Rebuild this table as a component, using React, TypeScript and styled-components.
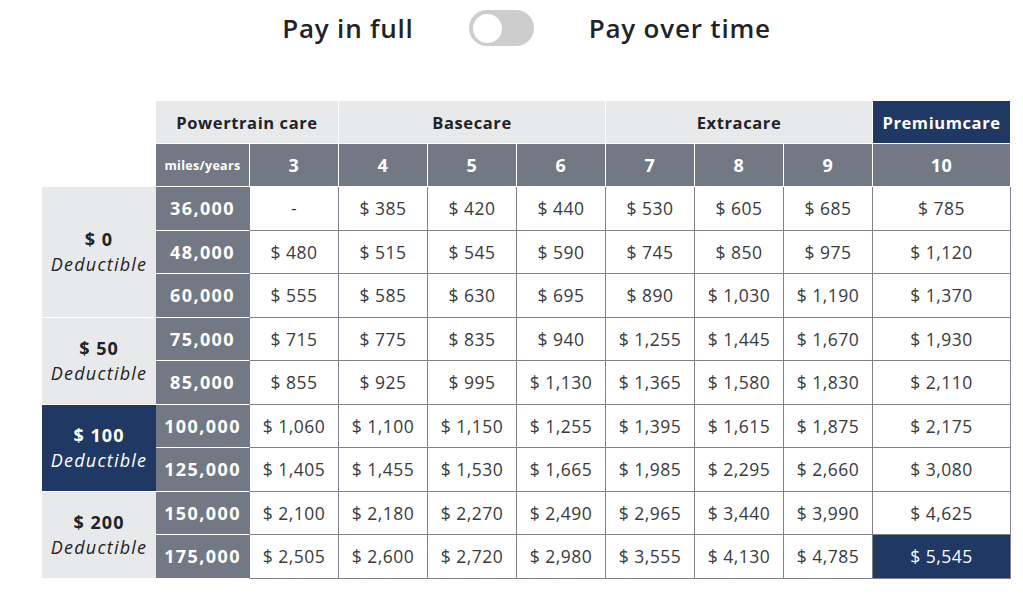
import React from "react";
import styled, { createGlobalStyle, css } from "styled-components";

const GlobalStyle = createGlobalStyle`
  html, body { margin: 0; padding: 0; background: #ffffff; }
  body { font-family: "Open Sans", "Liberation Sans", sans-serif; }
`;

const NAVY = "#1f3864";
const SLATE = "#737984";
const LIGHT = "#e8e9eb";
const LINE = "#7d828c";

const Page = styled.div`
  padding-left: 42px;
  width: 969px;
`;

const ToggleRow = styled.div`
  display: flex;
  align-items: center;
  justify-content: center;
  gap: 55px;
  padding-top: 10px;
  height: 36px;
  margin-bottom: 55px;
`;

const ToggleLabel = styled.span`
  font-size: 26px;
  font-weight: 600;
  color: #222326;
  letter-spacing: 0.8px;
`;

const Track = styled.div`
  width: 65px;
  height: 36px;
  border-radius: 18px;
  background: #cdcdcd;
  display: flex;
  align-items: center;
  padding: 0 4px;
  box-sizing: border-box;
`;

const Knob = styled.div`
  width: 29px;
  height: 29px;
  border-radius: 50%;
  background: #ffffff;
`;

const Table = styled.table`
  border-collapse: separate;
  border-spacing: 0;
  table-layout: fixed;
  width: 969px;
`;

const Col = styled.col<{ $w: number }>`
  width: ${(p) => p.$w}px;
`;

const cellBase = css`
  padding: 0;
  text-align: center;
  vertical-align: middle;
  box-sizing: border-box;
  white-space: nowrap;
`;

const Blank = styled.td`
  ${cellBase};
  background: #ffffff;
`;

const PlanCell = styled.th<{ $premium?: boolean }>`
  ${cellBase};
  height: 43px;
  background: ${(p) => (p.$premium ? NAVY : LIGHT)};
  color: ${(p) => (p.$premium ? "#ffffff" : "#222326")};
  font-size: 16.5px;
  font-weight: 700;
  border-right: 1px solid #ffffff;
  border-bottom: 1px solid #ffffff;
  letter-spacing: 0.6px;
`;

const YearCell = styled.th<{ $small?: boolean }>`
  ${cellBase};
  height: 43px;
  background: ${SLATE};
  color: #ffffff;
  font-size: ${(p) => (p.$small ? "12.5px" : "18px")};
  letter-spacing: ${(p) => (p.$small ? "0.3px" : "0.6px")};
  font-weight: 700;
  border-right: 1px solid #ffffff;
  border-bottom: 1px solid #ffffff;
`;

const DeductCell = styled.td<{ $active?: boolean }>`
  ${cellBase};
  background: ${(p) => (p.$active ? NAVY : LIGHT)};
  color: ${(p) => (p.$active ? "#ffffff" : "#222326")};
  border-bottom: 1px solid #ffffff;
  font-size: 18px;
  line-height: 25px;
  letter-spacing: 1px;
`;

const DeductAmount = styled.div`
  font-weight: 700;
`;

const DeductLabel = styled.div`
  font-style: italic;
  font-weight: 400;
  letter-spacing: 1.2px;
`;

const MilesCell = styled.th`
  ${cellBase};
  height: 43.5px;
  background: ${SLATE};
  color: #ffffff;
  font-size: 18px;
  font-weight: 700;
  letter-spacing: 1.4px;
  border-bottom: 1px solid #ffffff;
  border-right: 1px solid ${SLATE};
`;

const PriceCell = styled.td<{ $highlight?: boolean }>`
  ${cellBase};
  height: 43.5px;
  background: ${(p) => (p.$highlight ? NAVY : "#ffffff")};
  color: ${(p) => (p.$highlight ? "#ffffff" : "#3a3b3e")};
  font-size: 17.5px;
  font-weight: 400;
  letter-spacing: 0.5px;
  border-right: 1px solid ${LINE};
  border-bottom: 1px solid ${LINE};
`;

type Row = { miles: string; prices: string[] };
type Group = { amount: string; active?: boolean; rows: Row[] };

const groups: Group[] = [
  {
    amount: "$ 0",
    rows: [
      { miles: "36,000", prices: ["-", "$ 385", "$ 420", "$ 440", "$ 530", "$ 605", "$ 685", "$ 785"] },
      { miles: "48,000", prices: ["$ 480", "$ 515", "$ 545", "$ 590", "$ 745", "$ 850", "$ 975", "$ 1,120"] },
      { miles: "60,000", prices: ["$ 555", "$ 585", "$ 630", "$ 695", "$ 890", "$ 1,030", "$ 1,190", "$ 1,370"] },
    ],
  },
  {
    amount: "$ 50",
    rows: [
      { miles: "75,000", prices: ["$ 715", "$ 775", "$ 835", "$ 940", "$ 1,255", "$ 1,445", "$ 1,670", "$ 1,930"] },
      { miles: "85,000", prices: ["$ 855", "$ 925", "$ 995", "$ 1,130", "$ 1,365", "$ 1,580", "$ 1,830", "$ 2,110"] },
    ],
  },
  {
    amount: "$ 100",
    active: true,
    rows: [
      { miles: "100,000", prices: ["$ 1,060", "$ 1,100", "$ 1,150", "$ 1,255", "$ 1,395", "$ 1,615", "$ 1,875", "$ 2,175"] },
      { miles: "125,000", prices: ["$ 1,405", "$ 1,455", "$ 1,530", "$ 1,665", "$ 1,985", "$ 2,295", "$ 2,660", "$ 3,080"] },
    ],
  },
  {
    amount: "$ 200",
    rows: [
      { miles: "150,000", prices: ["$ 2,100", "$ 2,180", "$ 2,270", "$ 2,490", "$ 2,965", "$ 3,440", "$ 3,990", "$ 4,625"] },
      { miles: "175,000", prices: ["$ 2,505", "$ 2,600", "$ 2,720", "$ 2,980", "$ 3,555", "$ 4,130", "$ 4,785", "$ 5,545"] },
    ],
  },
];

const colWidths = [114, 94, 89, 89, 89, 89, 89, 89, 89, 138];

export default function App() {
  return (
    <>
      <GlobalStyle />
      <Page>
        <ToggleRow>
          <ToggleLabel>Pay in full</ToggleLabel>
          <Track>
            <Knob />
          </Track>
          <ToggleLabel>Pay over time</ToggleLabel>
        </ToggleRow>
        <Table>
          <colgroup>
            {colWidths.map((w, i) => (
              <Col key={i} $w={w} />
            ))}
          </colgroup>
          <thead>
            <tr>
              <Blank />
              <PlanCell colSpan={2}>Powertrain care</PlanCell>
              <PlanCell colSpan={3}>Basecare</PlanCell>
              <PlanCell colSpan={3}>Extracare</PlanCell>
              <PlanCell $premium>Premiumcare</PlanCell>
            </tr>
            <tr>
              <Blank />
              <YearCell $small>miles/years</YearCell>
              {["3", "4", "5", "6", "7", "8", "9", "10"].map((y) => (
                <YearCell key={y}>{y}</YearCell>
              ))}
            </tr>
          </thead>
          <tbody>
            {groups.map((g, gi) =>
              g.rows.map((r, ri) => (
                <tr key={`${gi}-${ri}`}>
                  {ri === 0 && (
                    <DeductCell rowSpan={g.rows.length} $active={g.active}>
                      <DeductAmount>{g.amount}</DeductAmount>
                      <DeductLabel>Deductible</DeductLabel>
                    </DeductCell>
                  )}
                  <MilesCell>{r.miles}</MilesCell>
                  {r.prices.map((p, pi) => (
                    <PriceCell
                      key={pi}
                      $highlight={gi === groups.length - 1 && ri === g.rows.length - 1 && pi === 7}
                    >
                      {p}
                    </PriceCell>
                  ))}
                </tr>
              ))
            )}
          </tbody>
        </Table>
      </Page>
    </>
  );
}
